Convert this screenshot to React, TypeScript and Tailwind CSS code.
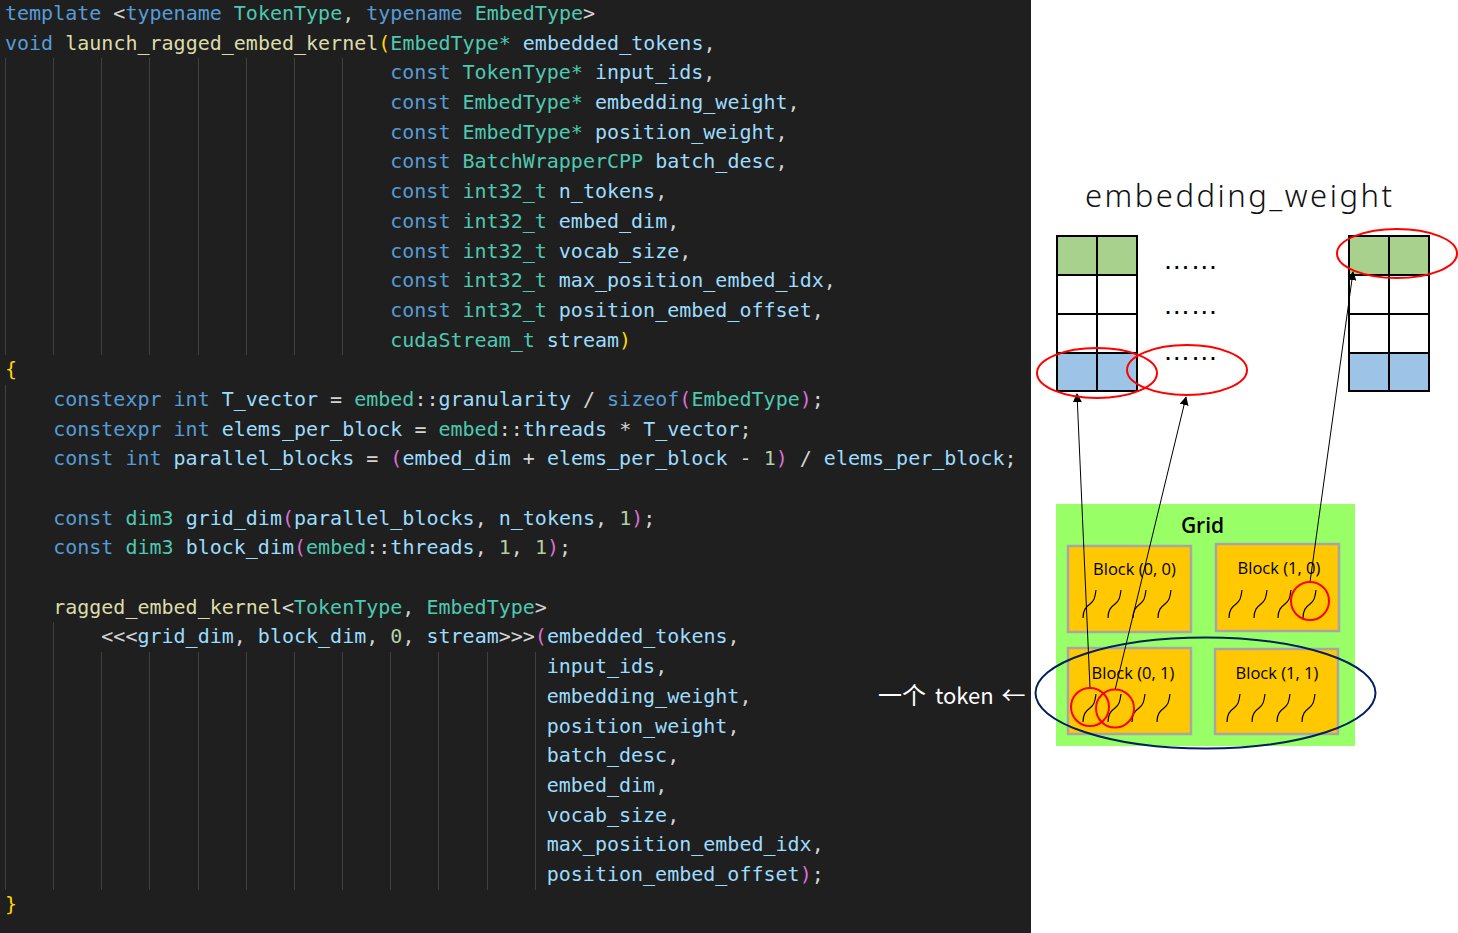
import React from "react";

const K = "text-[#569cd6]";
const T = "text-[#4ec9b0]";
const F = "text-[#dcdcaa]";
const V = "text-[#9cdcfe]";
const N = "text-[#b5cea8]";
const P = "text-[#d4d4d4]";
const B1 = "text-[#ffd700]";
const B2 = "text-[#da70d6]";

type Tok = [string, string];
type Line = { c: number; t: Tok[] };

const arg = (type: string, name: string, last = ","): Tok[] => [
  [K, "const "],
  [T, type + " "],
  [V, name],
  [P, last],
];

const lines: Line[] = [
  {
    c: 0,
    t: [
      [K, "template"],
      [P, " <"],
      [K, "typename"],
      [P, " "],
      [T, "TokenType"],
      [P, ", "],
      [K, "typename"],
      [P, " "],
      [T, "EmbedType"],
      [P, ">"],
    ],
  },
  {
    c: 0,
    t: [
      [K, "void"],
      [P, " "],
      [F, "launch_ragged_embed_kernel"],
      [B1, "("],
      [T, "EmbedType*"],
      [P, " "],
      [V, "embedded_tokens"],
      [P, ","],
    ],
  },
  { c: 32, t: arg("TokenType*", "input_ids") },
  { c: 32, t: arg("EmbedType*", "embedding_weight") },
  { c: 32, t: arg("EmbedType*", "position_weight") },
  { c: 32, t: arg("BatchWrapperCPP", "batch_desc") },
  { c: 32, t: arg("int32_t", "n_tokens") },
  { c: 32, t: arg("int32_t", "embed_dim") },
  { c: 32, t: arg("int32_t", "vocab_size") },
  { c: 32, t: arg("int32_t", "max_position_embed_idx") },
  { c: 32, t: arg("int32_t", "position_embed_offset") },
  {
    c: 32,
    t: [
      [T, "cudaStream_t "],
      [V, "stream"],
      [B1, ")"],
    ],
  },
  { c: 0, t: [[B1, "{"]] },
  {
    c: 4,
    t: [
      [K, "constexpr int "],
      [V, "T_vector"],
      [P, " = "],
      [T, "embed"],
      [P, "::"],
      [V, "granularity"],
      [P, " / "],
      [K, "sizeof"],
      [B2, "("],
      [T, "EmbedType"],
      [B2, ")"],
      [P, ";"],
    ],
  },
  {
    c: 4,
    t: [
      [K, "constexpr int "],
      [V, "elems_per_block"],
      [P, " = "],
      [T, "embed"],
      [P, "::"],
      [V, "threads"],
      [P, " * "],
      [V, "T_vector"],
      [P, ";"],
    ],
  },
  {
    c: 4,
    t: [
      [K, "const int "],
      [V, "parallel_blocks"],
      [P, " = "],
      [B2, "("],
      [V, "embed_dim"],
      [P, " + "],
      [V, "elems_per_block"],
      [P, " - "],
      [N, "1"],
      [B2, ")"],
      [P, " / "],
      [V, "elems_per_block"],
      [P, ";"],
    ],
  },
  { c: 4, t: [] },
  {
    c: 4,
    t: [
      [K, "const "],
      [T, "dim3 "],
      [V, "grid_dim"],
      [B2, "("],
      [V, "parallel_blocks"],
      [P, ", "],
      [V, "n_tokens"],
      [P, ", "],
      [N, "1"],
      [B2, ")"],
      [P, ";"],
    ],
  },
  {
    c: 4,
    t: [
      [K, "const "],
      [T, "dim3 "],
      [V, "block_dim"],
      [B2, "("],
      [T, "embed"],
      [P, "::"],
      [V, "threads"],
      [P, ", "],
      [N, "1"],
      [P, ", "],
      [N, "1"],
      [B2, ")"],
      [P, ";"],
    ],
  },
  { c: 4, t: [] },
  {
    c: 4,
    t: [
      [F, "ragged_embed_kernel"],
      [P, "<"],
      [T, "TokenType"],
      [P, ", "],
      [T, "EmbedType"],
      [P, ">"],
    ],
  },
  {
    c: 8,
    t: [
      [P, "<<<"],
      [V, "grid_dim"],
      [P, ", "],
      [V, "block_dim"],
      [P, ", "],
      [N, "0"],
      [P, ", "],
      [V, "stream"],
      [P, ">>>"],
      [B2, "("],
      [V, "embedded_tokens"],
      [P, ","],
    ],
  },
  { c: 45, t: [[V, "input_ids"], [P, ","]] },
  { c: 45, t: [[V, "embedding_weight"], [P, ","]] },
  { c: 45, t: [[V, "position_weight"], [P, ","]] },
  { c: 45, t: [[V, "batch_desc"], [P, ","]] },
  { c: 45, t: [[V, "embed_dim"], [P, ","]] },
  { c: 45, t: [[V, "vocab_size"], [P, ","]] },
  { c: 45, t: [[V, "max_position_embed_idx"], [P, ","]] },
  {
    c: 45,
    t: [
      [V, "position_embed_offset"],
      [B2, ")"],
      [P, ";"],
    ],
  },
  { c: 0, t: [[B1, "}"]] },
];

function Guides({ col }: { col: number }) {
  const out: React.ReactNode[] = [];
  for (let c = 0; c < col; c += 4) {
    const w = Math.min(4, col - c);
    out.push(
      <span
        key={c}
        className={
          w === 4
            ? "w-[4ch] shrink-0 self-stretch border-l border-[#404040]"
            : "w-[1ch] shrink-0 self-stretch border-l border-[#404040]"
        }
      />
    );
  }
  return <>{out}</>;
}

function Squiggle({ x, y }: { x: number; y: number }) {
  return (
    <path
      d={`M${x} ${y + 28} C${x} ${y + 20} ${x + 3} ${y + 17} ${x + 7} ${y + 14} C${x + 11} ${y + 11} ${x + 12} ${y + 8} ${x + 13} ${y}`}
      fill="none"
      stroke="#000"
      strokeWidth="1.2"
    />
  );
}

function Matrix({ x }: { x: number }) {
  const y = 236;
  const w = 80;
  const rows = [236, 275, 314, 353, 391];
  return (
    <g>
      <rect x={x} y={rows[0]} width={w} height={rows[1] - rows[0]} fill="#a9d18e" />
      <rect x={x} y={rows[3]} width={w} height={rows[4] - rows[3]} fill="#9dc3e6" />
      <rect x={x} y={y} width={w} height={391 - y} fill="none" stroke="#000" strokeWidth="2" />
      <line x1={x + 40} y1={y} x2={x + 40} y2={391} stroke="#000" strokeWidth="2" />
      {rows.slice(1, 4).map((r) => (
        <line key={r} x1={x} y1={r} x2={x + w} y2={r} stroke="#000" strokeWidth="2" />
      ))}
    </g>
  );
}

function Block({ x, y, w, h }: { x: number; y: number; w: number; h: number }) {
  return <rect x={x} y={y} width={w} height={h} fill="#ffc800" stroke="#a6a6a6" strokeWidth="2.5" />;
}

const blockFont = "'Open Sans', 'Noto Sans', sans-serif";

function Diagram() {
  return (
    <svg className="absolute inset-0 h-full w-full" viewBox="1031 0 427 933">
      <defs>
        <marker id="ah" viewBox="0 0 10 10" refX="9" refY="5" markerWidth="9" markerHeight="9" markerUnits="userSpaceOnUse" orient="auto">
          <path d="M0 0 L10 5 L0 10 z" fill="#000" />
        </marker>
      </defs>
      <text
        x="1085"
        y="206.5"
        fontSize="31"
        fontWeight="300"
        fontFamily="'Noto Sans', Lato, sans-serif"
        textLength={307}
        lengthAdjust="spacing"
        fill="#111"
      >
        embedding_weight
      </text>

      <Matrix x={1057} />
      <Matrix x={1349} />

      {[269, 314, 360].map((y) => (
        <text key={y} x="1163" y={y} fontSize="27.5" fontFamily="'Liberation Sans', sans-serif" fill="#000">
          ……
        </text>
      ))}

      <rect x="1056" y="504" width="299" height="242" fill="#99ff66" />
      <text x="1202.5" y="533" textAnchor="middle" fontSize="21" fontWeight="600" fontFamily={blockFont} fill="#000">
        Grid
      </text>

      <Block x={1068} y={546} w={123} h={86} />
      <Block x={1216} y={544} w={123} h={87} />
      <Block x={1068} y={648} w={123} h={86} />
      <Block x={1215} y={649} w={123} h={85} />

      <text x="1134.5" y="575" textAnchor="middle" fontSize="16.5" fontFamily={blockFont} fill="#000">
        Block (0, 0)
      </text>
      <text x="1279" y="574" textAnchor="middle" fontSize="16.5" fontFamily={blockFont} fill="#000">
        Block (1, 0)
      </text>
      <text x="1133" y="679" textAnchor="middle" fontSize="16.5" fontFamily={blockFont} fill="#000">
        Block (0, 1)
      </text>
      <text x="1277" y="679" textAnchor="middle" fontSize="16.5" fontFamily={blockFont} fill="#000">
        Block (1, 1)
      </text>

      {[1083, 1108, 1133, 1158].map((x) => (
        <Squiggle key={"a" + x} x={x} y={590} />
      ))}
      {[1229, 1254, 1278, 1303].map((x) => (
        <Squiggle key={"b" + x} x={x} y={590} />
      ))}
      {[1083, 1108, 1132, 1157].map((x) => (
        <Squiggle key={"c" + x} x={x} y={694} />
      ))}
      {[1227, 1252, 1277, 1302].map((x) => (
        <Squiggle key={"d" + x} x={x} y={694} />
      ))}

      <line x1="1090" y1="688" x2="1077" y2="394" stroke="#000" strokeWidth="1" markerEnd="url(#ah)" />
      <line x1="1115" y1="690" x2="1186" y2="397" stroke="#000" strokeWidth="1" markerEnd="url(#ah)" />
      <line x1="1310" y1="582" x2="1353" y2="272" stroke="#000" strokeWidth="1" markerEnd="url(#ah)" />

      <ellipse cx="1097" cy="373" rx="60" ry="25" fill="none" stroke="#ff0000" strokeWidth="2" />
      <ellipse cx="1187" cy="370" rx="60" ry="25" fill="none" stroke="#ff0000" strokeWidth="2" />
      <ellipse cx="1397" cy="253.5" rx="60" ry="24.5" fill="none" stroke="#ff0000" strokeWidth="2" />

      <circle cx="1310" cy="601" r="19" fill="none" stroke="#ff0000" strokeWidth="2" />
      <circle cx="1090" cy="707" r="19" fill="none" stroke="#ff0000" strokeWidth="2" />
      <circle cx="1115" cy="708.5" r="19" fill="none" stroke="#ff0000" strokeWidth="2" />

      <ellipse cx="1205.5" cy="693" rx="170" ry="55.5" fill="none" stroke="#002060" strokeWidth="2" />
    </svg>
  );
}

export default function App() {
  return (
    <div className="relative flex h-[933px] w-[1458px] overflow-hidden bg-white">
      <div className="h-full w-[1031px] shrink-0 overflow-hidden bg-[#1f1f1f] pl-[5px] font-['DejaVu_Sans_Mono',monospace] text-[20px]">
        <div className="-mt-[1px]">
          {lines.map((ln, i) => (
            <div key={i} className="flex h-[29.7px] whitespace-pre leading-[29.7px]">
              <Guides col={ln.c} />
              <span>
                {ln.t.map(([cls, txt], j) => (
                  <span key={j} className={cls}>
                    {txt}
                  </span>
                ))}
              </span>
            </div>
          ))}
        </div>
      </div>
      <div className="relative h-full flex-1 bg-white">
        <Diagram />
      </div>
      <div className="absolute left-[878px] top-[680px] flex h-[28px] items-center whitespace-nowrap font-['Noto_Sans_CJK_SC',sans-serif] text-[24px] leading-[28px] text-white">
        <span>一个</span>
        <span className="ml-[9px] text-[22px]">token</span>
        <span className="ml-[8px]">←</span>
      </div>
    </div>
  );
}
